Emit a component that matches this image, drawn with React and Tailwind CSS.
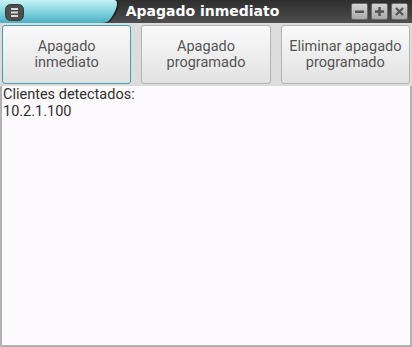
import React from 'react'

const font = { fontFamily: 'Roboto, "Noto Sans", sans-serif' }

function MenuIcon() {
  return (
    <svg width="19" height="17" viewBox="0 0 19 17" className="block">
      <rect x="0.5" y="0.5" width="18" height="16" rx="5" fill="#4d4d4d" stroke="#3a3a3a" />
      <rect x="6" y="4" width="7" height="2" fill="#d8d8d8" />
      <rect x="6" y="7.5" width="7" height="2" fill="#d8d8d8" />
      <rect x="6" y="11" width="7" height="2" fill="#d8d8d8" />
    </svg>
  )
}

function WinButton({ children }) {
  return (
    <div className="w-[17px] h-[17px] flex items-center justify-center rounded-[2px] bg-gradient-to-b from-[#d4d4d4] to-[#a8a8a8] border border-[#6a6a6a]">
      <svg width="11" height="11" viewBox="0 0 11 11">{children}</svg>
    </div>
  )
}

function TitleBar() {
  return (
    <div className="relative h-[23px] shrink-0 bg-gradient-to-b from-[#2e2e2e] to-[#4e4e4e] flex items-center">
      <svg className="absolute left-0 top-0" width="125" height="23" viewBox="0 0 125 23">
        <defs>
          <linearGradient id="tab" x1="0" y1="0" x2="0" y2="1">
            <stop offset="0" stopColor="#c6f1f6" />
            <stop offset="0.45" stopColor="#8cd8e4" />
            <stop offset="1" stopColor="#4eb0c4" />
          </linearGradient>
        </defs>
        <path d="M0 0 H116 C121 0 119 8 115 15 C112 20 110 23 104 23 H0 Z" fill="#242424" />
        <path d="M0 0 H114 C119 0 117 8 113 15 C110 20 108 23 102 23 H0 Z" fill="url(#tab)" />
      </svg>
      <div className="relative ml-[5px] mt-[1px]">
        <MenuIcon />
      </div>
      <div
        className="absolute inset-0 flex items-center justify-center text-white font-bold text-[14px] pr-[7px]"
        style={{ fontFamily: '"DejaVu Sans", sans-serif' }}
      >
        Apagado inmediato
      </div>
      <div className="ml-auto mr-[4px] flex gap-[3px] relative">
        <WinButton>
          <rect x="1" y="4.5" width="9" height="2.5" fill="#555" />
        </WinButton>
        <WinButton>
          <rect x="1" y="4.3" width="9" height="2.5" fill="#555" />
          <rect x="4.3" y="1" width="2.5" height="9" fill="#555" />
        </WinButton>
        <WinButton>
          <path d="M2 2 L9 9 M9 2 L2 9" stroke="#555" strokeWidth="2.2" />
        </WinButton>
      </div>
    </div>
  )
}

function ActionButton({ children, focused }) {
  return (
    <button
      className={
        'flex-1 h-[59px] rounded-[3px] border bg-gradient-to-b from-[#fafafa] to-[#e2e2e2] text-[#555555] text-[14.5px] leading-[16px] text-center ' +
        (focused ? 'border-[#3f9fb3]' : 'border-[#b4b4b4]')
      }
      style={font}
    >
      {children}
    </button>
  )
}

export default function App() {
  return (
    <div className="w-[412px] h-[347px] flex flex-col bg-[#b2b2b2] overflow-hidden">
      <TitleBar />
      <div className="flex gap-[10px] px-[2px] pt-[2px] pb-[2px] bg-[#dcdcdc]">
        <ActionButton focused>
          Apagado
          <br />
          inmediato
        </ActionButton>
        <ActionButton>
          Apagado
          <br />
          programado
        </ActionButton>
        <ActionButton>
          Eliminar apagado
          <br />
          programado
        </ActionButton>
      </div>
      <div className="flex-1 mx-[2px] mb-[2px] bg-[#fdfafd] pl-[1px] text-[14.5px] leading-[17px] text-[#303030]" style={font}>
        <div>Clientes detectados:</div>
        <div>10.2.1.100</div>
      </div>
    </div>
  )
}
